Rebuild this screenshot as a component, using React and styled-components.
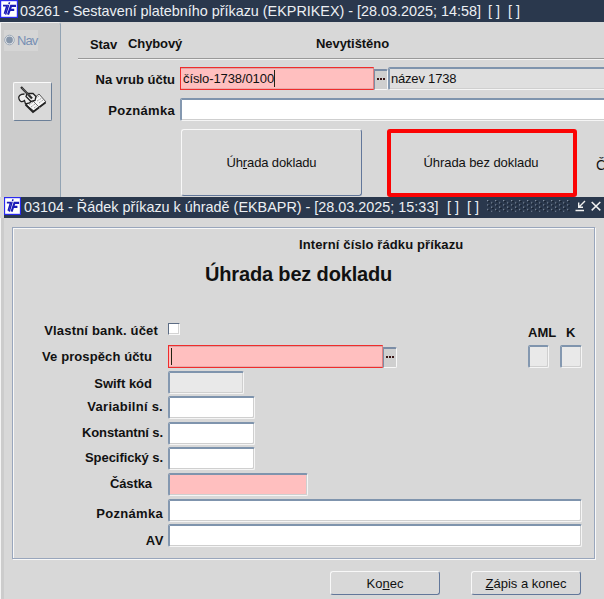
import React from 'react';
import styled, { createGlobalStyle } from 'styled-components';

const GlobalStyle = createGlobalStyle`
  * { box-sizing: border-box; }
  body { margin: 0; background: #d8d8d8; font-family: "Liberation Sans", Arial, sans-serif; font-size: 13px; color: #111; overflow: hidden; }
`;

const Screen = styled.div`
  width: 604px;
  height: 599px;
  overflow: hidden;
  display: flex;
  flex-direction: column;
  background: #d8d8d8;
  white-space: nowrap;
`;

const TitleBar = styled.div`
  display: flex;
  flex: none;
  height: ${p => p.$height}px;
  margin-left: ${p => p.$left || 0}px;
  background: #2a384d;
  color: #eceff3;
  font-size: 14.4px;
  line-height: ${p => p.$line}px;
`;

const Caption = styled.span`
  width: ${p => p.$width}px;
  margin-left: ${p => p.$left}px;
  letter-spacing: ${p => p.$spacing || 0}px;
`;

const Bracket = styled.span`
  width: 20px;
`;

const Upper = styled.div`
  flex: none;
  height: 175px;
  display: flex;
  overflow: hidden;
`;

const Sidebar = styled.div`
  width: 61px;
  height: 175px;
  flex: none;
  border-left: 1px solid #f4f4f4;
  border-right: 1px solid #92a3b3;
  border-top: 1px solid #eee;
  border-top-right-radius: 3px;
  background: #cccccc;
  padding: 7px 0 0 3px;
`;

const NavTag = styled.div`
  width: 34px;
  height: 21px;
  background: #d5d5d5;
  display: flex;
  align-items: center;
  color: #7890b4;
  font-size: 13px;
  letter-spacing: -0.9px;
  line-height: 21px;
  svg { flex: none; margin-right: 2px; }
`;

const ToolButton = styled.div`
  width: 39px;
  height: 39px;
  margin: 31px 0 0 9px;
  border: 1px solid;
  border-color: #fafafa #6b7f98 #6b7f98 #fafafa;
  border-radius: 2px;
  background: #d9d9d9;
  display: flex;
  align-items: flex-start;
  padding: 3px 0 0 3px;
`;

const Main = styled.div`
  flex: 1;
  min-width: 0;
`;

const StatusRow = styled.div`
  display: flex;
  height: 37px;
  margin-left: 17px;
  padding: 14px 0 0 12px;
  border-bottom: 1px solid #999;
  box-shadow: 0 1px #f2f2f2;
`;

const Bold = styled.span`
  font-weight: bold;
  line-height: 15px;
  width: ${p => (p.$width ? p.$width + 'px' : 'auto')};
  padding-top: ${p => p.$top || 0}px;
  letter-spacing: ${p => p.$spacing || 0}px;
`;

const FieldRow = styled.div`
  display: flex;
  height: ${p => p.$height}px;
`;

const Label = styled.label`
  flex: none;
  width: ${p => p.$width}px;
  padding-right: ${p => p.$gap}px;
  padding-top: ${p => p.$top}px;
  text-align: right;
  font-weight: bold;
  line-height: 15px;
  letter-spacing: ${p => p.$spacing || 0}px;
`;

const fills = { white: '#fff', pink: '#ffbfbf', locked: '#e9e9e9', plain: '#dfdfdf' };

const Field = styled.div`
  flex: none;
  width: ${p => p.$width}px;
  height: ${p => p.$height || 23}px;
  margin-top: ${p => p.$top || 0}px;
  border: solid;
  border-width: 2px 1px 1px 2px;
  border-color: #7f94ad #f5f5f5 #f5f5f5 #8498b0;
  border-radius: 2px;
  box-shadow: inset -1px -1px #cfcfcf;
  background: ${p => fills[p.$fill || 'white']};
  padding-left: 1px;
  line-height: ${p => (p.$height || 23) - 3}px;
  letter-spacing: ${p => p.$spacing || 0}px;
`;

const ActiveField = styled.div`
  flex: none;
  display: flex;
  align-items: center;
  width: ${p => p.$width}px;
  height: 23px;
  border: 1px solid #f02c2c;
  border-right-color: #e08080;
  background: #ffbfbf;
  box-shadow: inset 0 1px #d9a6a6, inset 0 -1px #e9aaaa;
  padding-left: 2px;
  letter-spacing: -0.1px;
`;

const Caret = styled.span`
  width: 1px;
  height: 17px;
  background: #221;
`;

const Picker = styled.div`
  flex: none;
  width: 14px;
  height: 21px;
  margin-top: 2px;
  border: solid;
  border-width: 2px 1px 1px 1px;
  border-color: #7b8da6 #f7f7f7 #f7f7f7 #7b8da6;
  border-radius: 0 2px 2px 0;
  background: #cfcfcf;
  display: flex;
  justify-content: center;
  gap: 1px;
  padding-top: 7px;
`;

const Dot = styled.span`
  width: 2px;
  height: 2px;
  background: #3a1717;
`;

const AccountFields = styled.div`
  display: flex;
  padding-top: 8px;
`;

const Choices = styled.div`
  display: flex;
  margin-left: 120px;
`;

const Button = styled.div`
  flex: none;
  width: ${p => p.$width}px;
  height: ${p => p.$height}px;
  border: 1px solid;
  border-color: #f8f8f8 #62779a #62779a #f8f8f8;
  border-radius: 3px;
  display: flex;
  align-items: center;
  justify-content: center;
  letter-spacing: ${p => p.$spacing || 0}px;
`;

const Highlighted = styled(Button)`
  margin-left: 25px;
  padding: 0 2px 2px 0;
  border: 4px solid #fb0404;
  border-radius: 3px;
`;

const CutText = styled.span`
  margin: 28px 0 0 19px;
  font-size: 14px;
`;

const DialogBody = styled.div`
  flex: 1;
  border-left: 1px solid #f4f4f4;
  box-shadow: inset 3px 0 #cccccc;
  padding: 9px 0 0 11px;
`;

const Panel = styled.div`
  width: 583px;
  height: 332px;
  border: 1px solid #99a6bc;
  box-shadow: inset 1px 1px #f8f8f8, 1px 1px #f8f8f8;
`;

const PanelHead = styled.div`
  display: flex;
  flex-direction: column;
  height: 95px;
`;

const RowLabel = styled.div`
  padding-left: 286px;
  padding-top: 9px;
  font-weight: bold;
  line-height: 15px;
  letter-spacing: 0.12px;
`;

const Heading = styled.div`
  padding-left: 192px;
  margin-top: 9px;
  font-weight: bold;
  font-size: 20px;
  line-height: 26px;
  letter-spacing: -0.16px;
`;

const Checkbox = styled.div`
  width: 12px;
  height: 12px;
  border: 1px solid;
  border-color: #5c6c84 #fafafa #fafafa #5c6c84;
  background: #fff;
  box-shadow: inset -1px -1px #d4d4d4;
`;

const Flags = styled.div`
  display: flex;
  margin-left: 348px;
  padding-top: 2px;
`;

const FlagFields = styled.div`
  display: flex;
  gap: 11px;
  margin-left: 131px;
`;

const Actions = styled.div`
  display: flex;
  gap: 31px;
  padding: 12px 0 0 318px;
`;

const WindowControls = styled.div`
  display: flex;
  align-items: flex-start;
  padding-top: 3px;
  svg:nth-child(2) { margin-left: 4px; }
  svg:nth-child(3) { margin-left: 5px; }
`;

const Logo = ({ size }) => (
  <svg width={size} height={18} viewBox="0 0 18 18" preserveAspectRatio="none">
    <rect x=".6" y=".6" width="16.8" height="16.8" fill="#fff" stroke="#2a2af0" strokeWidth="1.2" />
    <path d="M3 5.6h4L4.4 13.8" fill="none" stroke="#1a1ab8" strokeWidth="1.6" />
    <path d="M9.6 2.2 8.9 4.2M8.6 5 5.6 14.6" fill="none" stroke="#1a1ab8" strokeWidth="1.5" />
    <path d="M16 5.9h-4.9L8 14.6M9.6 9.9h4.6" fill="none" stroke="#1a1ab8" strokeWidth="2.2" />
  </svg>
);

const BookIcon = () => (
  <svg width="30" height="30" viewBox="0 0 30 30">
    <path d="M9 19 22 8l7 8-12 9z" fill="#f8f8f8" stroke="#444" strokeWidth=".9" />
    <path d="m8.500 18.500 7.500 7.500L28.500 16.500" fill="none" stroke="#222" strokeWidth="1.8" />
    <path d="m15 14 8 8" stroke="#777" />
    <path d="m12 19 4-3M14 21l4-3M17 22l3-2M18 13l4-3M20 15l5-3M22 17l4-3" stroke="#a5a5a5" strokeDasharray="2 1" />
    <path d="M7.500 8C3 8 .8 10.500 2 13c1 3 3 3.500 5.500 1.500l1 3.500 4-1 3-3" fill="#eee" stroke="#222" strokeWidth="1.3" />
    <path d="M10 7.500h6l3 3-1 4-4 1-5-5z" fill="#eee" stroke="#222" strokeWidth="1.3" />
    <path d="m4 1 11 11.500" stroke="#2b2b2b" strokeWidth="2.3" />
    <path d="m5 2 7 7.500" stroke="#888" strokeWidth=".6" />
  </svg>
);

const Grip = () => (
  <svg width="84" height="12" viewBox="0 0 84 12">
    <defs>
      <pattern id="grip" width="8" height="4.4" patternUnits="userSpaceOnUse">
        <path d="M0 0h1.300v1H0zM4 2.200h1.300v1H4z" fill="#8995a6" />
        <path d="M1.200 1h1.400v1H1.200zM5.200 3.200h1.400v1H5.200z" fill="#060b14" />
      </pattern>
    </defs>
    <rect width="84" height="12" fill="url(#grip)" />
  </svg>
);

const MinimizeIcon = () => (
  <svg width="11" height="12" viewBox="0 0 11 12" fill="none" stroke="#f0f0f0" strokeWidth="1.4">
    <path d="M10 1 4 7M3.700 2.500V7.300H8M.5 10.500H9" />
  </svg>
);

const CloseIcon = () => (
  <svg width="10" height="12" viewBox="0 0 10 12" fill="none" stroke="#f0f0f0" strokeWidth="1.5">
    <path d="m.7 2 8.600 8.400M9.300 2 .7 10.400" />
  </svg>
);

const Dots = () => (
  <Picker><Dot /><Dot /><Dot /></Picker>
);

const rows = [
  { label: 'Swift kód', gap: 16, top: 5, height: 25, width: 76, fill: 'locked' },
  { label: 'Variabilní s.', gap: 5, top: 3, height: 26, width: 87, spacing: 0.26 },
  { label: 'Konstantní s.', gap: 5, top: 3, height: 25, width: 87, spacing: -0.1 },
  { label: 'Specifický s.', gap: 5, top: 3, height: 26, width: 87, spacing: -0.06 },
  { label: 'Částka', gap: 16, top: 3, height: 26, width: 140, fill: 'pink', spacing: -0.1 },
  { label: 'Poznámka', gap: 5, top: 7, height: 25, width: 414, spacing: 0.3 },
  { label: 'AV', gap: 4, top: 9, height: 25, width: 414, spacing: 0.6 },
];

export default function App() {
  return (
    <>
      <GlobalStyle />
      <Screen>
        <TitleBar $height={22} $line={22}>
          <Logo size={18} />
          <Caption $left={2} $width={468} $spacing={-0.01}>03261 - Sestavení platebního příkazu (EKPRIKEX) - [28.03.2025; 14:58]</Caption>
          <Bracket>[ ]</Bracket>
          <Bracket>[ ]</Bracket>
        </TitleBar>
        <Upper>
          <Sidebar>
            <NavTag>
              <svg width="11" height="13" viewBox="0 0 11 13">
                <circle cx="5.5" cy="6" r="4.8" fill="#e6e8ea" stroke="#9da9b8" />
                <circle cx="5.5" cy="6" r="3.4" fill="#8796aa" />
              </svg>
              Nav
            </NavTag>
            <ToolButton><BookIcon /></ToolButton>
          </Sidebar>
          <Main>
            <StatusRow>
              <Bold $width={38} $top={1} $spacing={-0.1}>Stav</Bold>
              <Bold $width={188} $spacing={-0.1}>Chybový</Bold>
              <Bold $spacing={-0.06}>Nevytištěno</Bold>
            </StatusRow>
            <FieldRow $height={39}>
              <Label $width={119} $gap={5} $top={13}>Na vrub účtu</Label>
              <AccountFields>
                <ActiveField $width={194}>číslo-1738/0100<Caret /></ActiveField>
                <Dots />
                <Field $width={230} $fill="plain" $spacing={-0.2}>název 1738</Field>
              </AccountFields>
            </FieldRow>
            <FieldRow $height={31}>
              <Label $width={119} $gap={5} $top={5} $spacing={0.3}>Poznámka</Label>
              <Field $width={440} />
            </FieldRow>
            <Choices>
              <Button $width={181} $height={67} $spacing={-0.13}>Úh<u>r</u>ada dokladu</Button>
              <Highlighted $width={190} $height={68} $spacing={-0.08}>Úhrada bez dokladu</Highlighted>
              <CutText>Č</CutText>
            </Choices>
          </Main>
        </Upper>
        <TitleBar $height={21} $left={4} $line={20}>
          <Logo size={17} />
          <Caption $left={3} $width={423}>03104 - Řádek příkazu k úhradě (EKBAPR) - [28.03.2025; 15:33]</Caption>
          <Bracket>[ ]</Bracket>
          <Bracket>[ ]</Bracket>
          <WindowControls><Grip /><MinimizeIcon /><CloseIcon /></WindowControls>
        </TitleBar>
        <DialogBody>
          <Panel>
            <PanelHead>
              <RowLabel>Interní číslo řádku příkazu</RowLabel>
              <Heading>Úhrada bez dokladu</Heading>
            </PanelHead>
            <FieldRow $height={22}>
              <Label $width={155} $gap={10} $spacing={0.18}>Vlastní bank. účet</Label>
              <Checkbox />
              <Flags>
                <Bold $width={38}>AML</Bold>
                <Bold>K</Bold>
              </Flags>
            </FieldRow>
            <FieldRow $height={26}>
              <Label $width={155} $gap={16} $top={4} $spacing={0.1}>Ve prospěch účtu</Label>
              <ActiveField $width={215}><Caret /></ActiveField>
              <Dots />
              <FlagFields>
                <Field $width={21} $fill="locked" />
                <Field $width={22} $fill="locked" />
              </FlagFields>
            </FieldRow>
            {rows.map(r => (
              <FieldRow key={r.label} $height={r.height}>
                <Label $width={155} $gap={r.gap} $top={r.top} $spacing={r.spacing}>{r.label}</Label>
                <Field $width={r.width} $fill={r.fill} />
              </FieldRow>
            ))}
          </Panel>
          <Actions>
            <Button $width={110} $height={24}>Ko<u>n</u>ec</Button>
            <Button $width={110} $height={24}><u>Z</u>ápis a konec</Button>
          </Actions>
        </DialogBody>
      </Screen>
    </>
  );
}
